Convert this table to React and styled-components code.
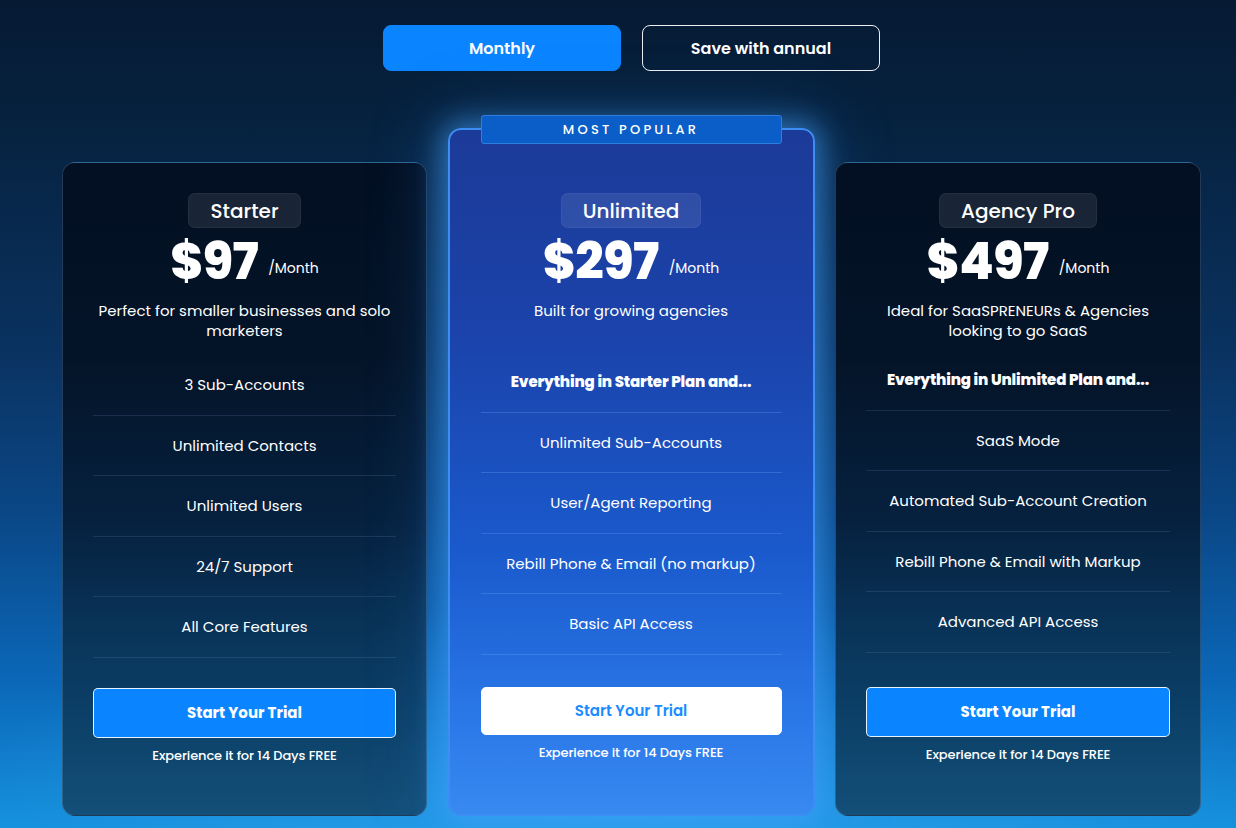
import React from "react";
import styled, { createGlobalStyle, css } from "styled-components";

const Global = createGlobalStyle`
  html, body { margin: 0; padding: 0; }
  body {
    font-family: Poppins, Inter, "Open Sans", sans-serif;
    color: #fff;
    background: #061a33;
  }
  * { box-sizing: border-box; }
`;

const Page = styled.div`
  width: 1236px;
  height: 828px;
  overflow: hidden;
  padding: 25px 35px 0 62px;
  background:
    radial-gradient(ellipse 55% 30% at 50% 102%, rgba(60, 170, 245, 0.55), rgba(60, 170, 245, 0) 100%),
    linear-gradient(180deg, #061a33 0%, #06223f 15%, #0a3260 42%, #0a4786 62%, #0b67b8 82%, #1490dc 100%);
`;

const Toggle = styled.div`
  display: flex;
  justify-content: center;
  gap: 21px;
`;

const ToggleButton = styled.button`
  width: 238px;
  height: 46px;
  border-radius: 8px;
  font-family: inherit;
  font-size: 16px;
  font-weight: 600;
  color: #fff;
  cursor: pointer;
  ${(p) =>
    p.$active
      ? css`
          background: #0a84ff;
          border: 1px solid #0a84ff;
        `
      : css`
          background: transparent;
          border: 1px solid rgba(255, 255, 255, 0.92);
        `}
`;

const Cards = styled.div`
  display: grid;
  grid-template-columns: 365px 367px 366px;
  column-gap: 20px;
  justify-content: space-between;
  align-items: end;
  margin-top: 57px;
`;

const Card = styled.div`
  position: relative;
  display: flex;
  flex-direction: column;
  align-items: center;
  border-radius: 13px;
  ${(p) =>
    p.$popular
      ? css`
          height: 688px;
          padding: 63px 31px 0;
          border: 2px solid #3d8ef3;
          background: linear-gradient(180deg, #1c3a98 0%, #1b43ab 30%, #1a5acd 62%, #2a78e8 86%, #3889f0 100%);
          box-shadow: 0 0 28px 6px rgba(70, 165, 255, 0.55), 0 0 70px 10px rgba(60, 150, 255, 0.25);
        `
      : css`
          height: 654px;
          padding: 30px 30px 0;
          border: 1px solid rgba(120, 165, 215, 0.28);
          background: linear-gradient(180deg, #030f22 0%, #041428 30%, #06213f 55%, #093459 72%, #0c4169 86%, #134f78 100%);
        `}
`;

const Badge = styled.div`
  position: absolute;
  top: -15px;
  left: 31px;
  right: 31px;
  height: 29px;
  display: flex;
  align-items: center;
  justify-content: center;
  background: #0b5ec7;
  border: 1px solid #2e7ee2;
  border-radius: 3px;
  font-size: 13px;
  font-weight: 500;
  letter-spacing: 3.2px;
  color: #fff;
`;

const Pill = styled.div`
  height: 35px;
  padding: 0 21px;
  display: flex;
  align-items: center;
  border-radius: 7px;
  background: rgba(255, 255, 255, 0.09);
  border: 1px solid rgba(255, 255, 255, 0.05);
  font-size: 20px;
  font-weight: 500;
`;

const PriceRow = styled.div`
  display: flex;
  align-items: flex-end;
  justify-content: center;
  gap: 10px;
  height: 60px;
  margin-top: 4px;
`;

const Amount = styled.span`
  font-size: 50px;
  font-weight: 800;
  line-height: 60px;
  letter-spacing: -0.5px;
`;

const Per = styled.span`
  font-size: 14px;
  font-weight: 400;
  line-height: 14px;
  padding-bottom: 17px;
`;

const Description = styled.p`
  margin: 9px 0 0;
  min-height: 40px;
  font-size: 15px;
  line-height: 20px;
  text-align: center;
  font-weight: 400;
`;

const Features = styled.ul`
  list-style: none;
  padding: 0;
  margin: ${(p) => 14 + p.$shift}px 0 0;
  width: 100%;
`;

const Feature = styled.li`
  height: 60.5px;
  display: flex;
  align-items: center;
  justify-content: center;
  border-bottom: 1px solid ${(p) => (p.$popular ? "rgba(120, 170, 255, 0.28)" : "rgba(130, 170, 220, 0.16)")};
  font-size: 15px;
  font-weight: ${(p) => (p.$bold ? 800 : 400)};
  letter-spacing: ${(p) => (p.$bold ? "-0.15px" : "0")};
`;

const CTA = styled.button`
  width: 100%;
  height: ${(p) => (p.$popular ? 48 : 50)}px;
  margin-top: ${(p) => p.$gap}px;
  border-radius: 5px;
  font-family: inherit;
  font-size: 15px;
  font-weight: 700;
  cursor: pointer;
  ${(p) =>
    p.$popular
      ? css`
          background: #fff;
          color: #1a8cff;
          border: 1px solid #fff;
          font-weight: 600;
        `
      : css`
          background: #0a84ff;
          color: #fff;
          border: 1px solid rgba(255, 255, 255, 0.9);
        `}
`;

const Note = styled.div`
  margin-top: 9px;
  font-size: 13px;
  line-height: 18px;
  font-weight: 500;
  letter-spacing: -0.1px;
`;

const plans = [
  {
    name: "Starter",
    price: "$97",
    desc: ["Perfect for smaller businesses and solo", "marketers"],
    features: ["3 Sub-Accounts", "Unlimited Contacts", "Unlimited Users", "24/7 Support", "All Core Features"],
    shift: 0,
    gap: 30,
  },
  {
    name: "Unlimited",
    price: "$297",
    popular: true,
    desc: ["Built for growing agencies"],
    lead: "Everything in Starter Plan and...",
    features: ["Unlimited Sub-Accounts", "User/Agent Reporting", "Rebill Phone & Email (no markup)", "Basic API Access"],
    shift: -3,
    gap: 32,
  },
  {
    name: "Agency Pro",
    price: "$497",
    desc: ["Ideal for SaaSPRENEURs & Agencies", "looking to go SaaS"],
    lead: "Everything in Unlimited Plan and...",
    features: ["SaaS Mode", "Automated Sub-Account Creation", "Rebill Phone & Email with Markup", "Advanced API Access"],
    shift: -5,
    gap: 34,
  },
];

export default function App() {
  return (
    <>
      <Global />
      <Page>
        <Toggle>
          <ToggleButton $active>Monthly</ToggleButton>
          <ToggleButton>Save with annual</ToggleButton>
        </Toggle>
        <Cards>
          {plans.map((p) => (
            <Card key={p.name} $popular={p.popular}>
              {p.popular && <Badge>MOST POPULAR</Badge>}
              <Pill>{p.name}</Pill>
              <PriceRow>
                <Amount>{p.price}</Amount>
                <Per>/Month</Per>
              </PriceRow>
              <Description>
                {p.desc.map((d, i) => (
                  <React.Fragment key={i}>
                    {i > 0 && <br />}
                    {d}
                  </React.Fragment>
                ))}
              </Description>
              <Features $shift={p.shift}>
                {p.lead && (
                  <Feature $bold $popular={p.popular}>
                    {p.lead}
                  </Feature>
                )}
                {p.features.map((f) => (
                  <Feature key={f} $popular={p.popular}>
                    {f}
                  </Feature>
                ))}
              </Features>
              <CTA $popular={p.popular} $gap={p.gap}>Start Your Trial</CTA>
              <Note>Experience it for 14 Days FREE</Note>
            </Card>
          ))}
        </Cards>
      </Page>
    </>
  );
}
